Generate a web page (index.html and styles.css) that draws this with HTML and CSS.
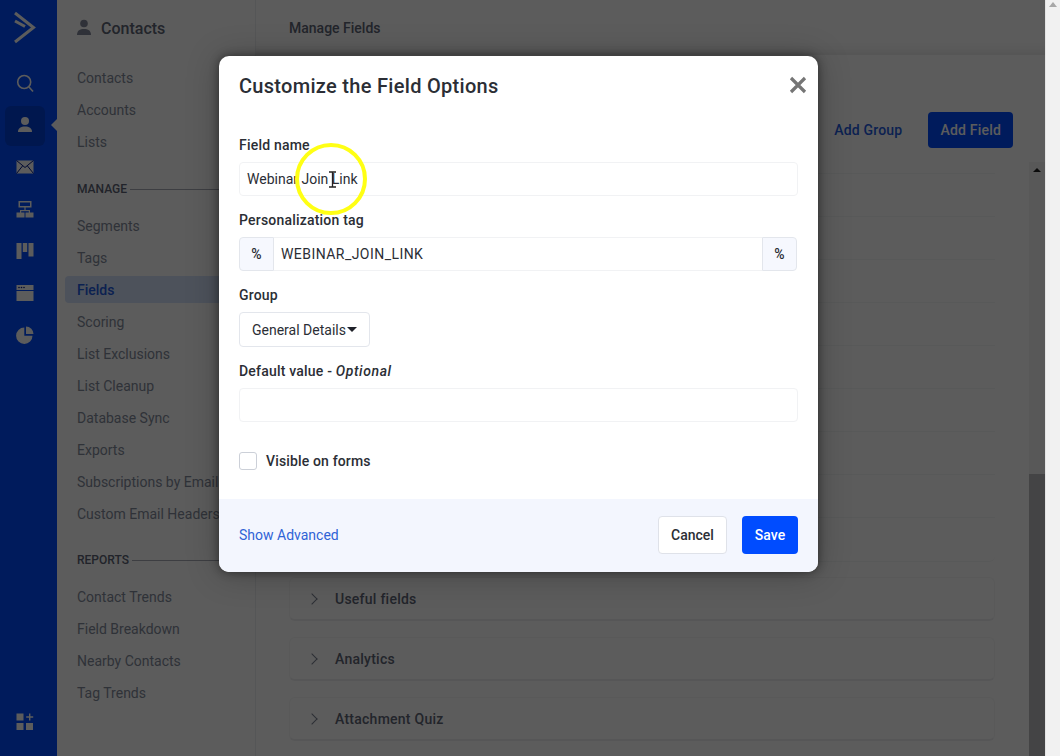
FILE: index.html
```html
<!DOCTYPE html>
<html lang="en">
<head>
  <meta charset="UTF-8">
  <meta name="viewport" content="width=device-width, initial-scale=1.0">
  <title>Manage Fields</title>
  <link rel="stylesheet" href="styles.css">
</head>
<body>

  <div class="page">
    <div class="app">

      <!-- Icon rail -->
      <nav class="rail">
        <div class="rail-logo">
          <svg width="24" height="34" viewBox="0 0 24 34" fill="none" stroke="#fff" stroke-width="3"><path d="M2 2 L20.500 16.500 L2 31"/><path d="M2 10 L12 15.500"/></svg>
        </div>
        <div class="rail-item">
          <svg width="20" height="20" viewBox="0 0 20 20" fill="none" stroke="#fff" stroke-width="1.600"><circle cx="9.200" cy="9" r="6.500"/><path d="M14 14 L18 18.500"/></svg>
        </div>
        <div class="rail-item active">
          <svg width="20" height="20" viewBox="0 0 20 20" fill="#fff"><circle cx="10" cy="6" r="4"/><path d="M3 17 C3 13 6 11.500 10 11.500 C14 11.500 17 13 17 17 Z"/></svg>
        </div>
        <div class="rail-item">
          <svg width="20" height="20" viewBox="0 0 20 20"><rect x="1.500" y="3.500" width="17" height="13" fill="#fff"/><path d="M1.500 3.500 L10 10.500 L18.500 3.500 M1.500 16.500 L7.500 9 M18.500 16.500 L12.500 9" fill="none" stroke="#001a8c" stroke-width="1"/></svg>
        </div>
        <div class="rail-item">
          <svg width="20" height="20" viewBox="0 0 20 20" fill="#fff"><path d="M3.500 2 H16.500 V8.500 H3.500 Z M5 3.500 V7 H15 V3.500 Z"/><rect x="9.400" y="8" width="1.200" height="3.500"/><rect x="5" y="11" width="10" height="1.200"/><rect x="1.500" y="13.500" width="8" height="5"/><rect x="10.500" y="13.500" width="8" height="5"/><rect x="5" y="11" width="1.200" height="3"/><rect x="13.800" y="11" width="1.200" height="3"/></svg>
        </div>
        <div class="rail-item">
          <svg width="20" height="20" viewBox="0 0 20 20" fill="#fff"><rect x="1.500" y="2" width="5" height="16"/><rect x="7.800" y="2" width="4.400" height="9"/><rect x="13.500" y="2" width="5" height="13.500"/></svg>
        </div>
        <div class="rail-item">
          <svg width="20" height="20" viewBox="0 0 20 20" fill="#fff"><path d="M1.500 2 H18.500 V7 H1.500 Z" /><rect x="1.500" y="8" width="17" height="10"/><circle cx="4" cy="4.500" r=".8" fill="#001a8c"/><circle cx="6.500" cy="4.500" r=".8" fill="#001a8c"/><circle cx="9" cy="4.500" r=".8" fill="#001a8c"/></svg>
        </div>
        <div class="rail-item">
          <svg width="20" height="20" viewBox="0 0 20 20" fill="#fff"><path d="M9.300 2.500 V10.700 H17.500 A8.200 8.200 0 1 1 9.300 2.500 Z"/><path d="M11 1.500 A7.500 7.500 0 0 1 18.500 9 H11 Z"/></svg>
        </div>
        <div class="rail-apps">
          <svg width="20" height="20" viewBox="0 0 20 20" fill="#fff"><rect x="1.500" y="1.500" width="7" height="7"/><rect x="1.500" y="11" width="7" height="7"/><rect x="11" y="11" width="7" height="7"/><path d="M14 1.500 H15.400 V4.300 H18.200 V5.700 H15.400 V8.500 H14 V5.700 H11.200 V4.300 H14 Z"/></svg>
        </div>
      </nav>

      <!-- Section navigation -->
      <aside class="subnav">
        <div class="subnav-title">
          <svg width="14" height="18" viewBox="0 0 14 18" fill="#83899b"><circle cx="7" cy="4.500" r="3.800"/><path d="M0 16 C0 11.500 3 10 7 10 C11 10 14 11.500 14 16 Z"/></svg>
          <span>Contacts</span>
        </div>
        <ul class="subnav-list">
          <li>Contacts</li>
          <li>Accounts</li>
          <li>Lists</li>
        </ul>
        <div class="subnav-section">MANAGE</div>
        <ul class="subnav-list">
          <li>Segments</li>
          <li>Tags</li>
          <li class="current">Fields</li>
          <li>Scoring</li>
          <li>List Exclusions</li>
          <li>List Cleanup</li>
          <li>Database Sync</li>
          <li>Exports</li>
          <li>Subscriptions by Email</li>
          <li>Custom Email Headers</li>
        </ul>
        <div class="subnav-section reports">REPORTS</div>
        <ul class="subnav-list">
          <li>Contact Trends</li>
          <li>Field Breakdown</li>
          <li>Nearby Contacts</li>
          <li>Tag Trends</li>
        </ul>
      </aside>

      <!-- Main content behind the dialog -->
      <main class="main">
        <header class="main-header">Manage Fields</header>
        <div class="toolbar">
          <span class="add-group">Add Group</span>
          <span class="add-field">Add Field</span>
        </div>
        <div class="scroller">
          <div class="field-groups">
            <div class="field-table">
              <div class="field-row first"></div>
              <div class="field-row"></div>
              <div class="field-row"></div>
              <div class="field-row"></div>
              <div class="field-row"></div>
              <div class="field-row"></div>
              <div class="field-row"></div>
              <div class="field-row"></div>
              <div class="field-row"></div>
              <div class="field-row"></div>
            </div>
            <div class="accordion"><span class="chevron"></span>Useful fields</div>
            <div class="accordion"><span class="chevron"></span>Analytics</div>
            <div class="accordion"><span class="chevron"></span>Attachment Quiz</div>
          </div>
          <div class="inner-scrollbar">
            <span class="inner-arrow"></span>
            <div class="inner-thumb"></div>
          </div>
        </div>
      </main>
    </div>

    <div class="overlay"></div>

    <!-- Customize dialog -->
    <div class="modal">
      <div class="modal-head">
        <h2>Customize the Field Options</h2>
        <svg class="modal-close" width="18" height="18" viewBox="0 0 18 18" fill="none" stroke="#757575" stroke-width="3.200"><path d="M2 2 L16 16 M16 2 L2 16"/></svg>
      </div>
      <div class="modal-body">
        <div class="field">
          <label>Field name</label>
          <div class="input">Webinar Join Link</div>
        </div>
        <div class="field">
          <label>Personalization tag</label>
          <div class="tag-input">
            <span class="addon left">%</span>
            <div class="tag-value">WEBINAR_JOIN_LINK</div>
            <span class="addon right">%</span>
          </div>
        </div>
        <div class="field">
          <label>Group</label>
          <div class="select">General Details<span class="caret"></span></div>
        </div>
        <div class="field">
          <label>Default value - <em>Optional</em></label>
          <div class="input"></div>
        </div>
        <div class="check-row">
          <span class="checkbox"></span>
          <span>Visible on forms</span>
        </div>
      </div>
      <div class="modal-foot">
        <a class="show-advanced">Show Advanced</a>
        <div class="modal-actions">
          <button class="btn-cancel">Cancel</button>
          <button class="btn-save">Save</button>
        </div>
      </div>
    </div>

    <!-- Recording cursor highlight -->
    <div class="cursor-ring"></div>
    <svg class="cursor-beam" width="11" height="17" viewBox="0 0 11 17" fill="none" stroke="#222" stroke-width="1.300"><path d="M2 1 H9 M5.500 1 V16 M2 16 H9"/></svg>
  </div>

  <div class="page-scrollbar"><span class="page-arrow"></span></div>

</body>
</html>
```

FILE: styles.css
```css
/* General */
body {
  font-family: Roboto, "Liberation Sans", sans-serif;
  margin: 0;
  width: 1060px;
  height: 756px;
  overflow: hidden;
  display: flex;
  background-color: #ffffff;
  color: #1f2129;
}

ul {
  list-style: none;
  margin: 0;
  padding: 0;
}

.page {
  position: relative;
  width: 1045px;
  height: 756px;
  overflow: hidden;
}

.app {
  display: flex;
  height: 100%;
}

/* Icon rail */
.rail {
  width: 57px;
  flex-shrink: 0;
  padding-right: 7px;
  box-sizing: border-box;
  background-color: #004cff;
  display: flex;
  flex-direction: column;
  align-items: center;
}

.rail-logo {
  height: 62px;
  padding-top: 11px;
  box-sizing: border-box;
}

.rail-logo svg {
  display: block;
}

.rail-item {
  width: 40px;
  height: 42px;
  display: flex;
  align-items: center;
  justify-content: center;
}

.rail-item.active {
  position: relative;
  background-color: #0040d8;
  border-radius: 6px;
  height: 40px;
  margin: 2px 0 0;
}

.rail-item.active svg {
  margin-top: -2px;
}

/* notch pointing at the open section */
.rail-item.active::after {
  content: "";
  position: absolute;
  right: -12px;
  top: 13px;
  border: 6px solid transparent;
  border-left: 0;
  border-right-color: #ffffff;
}

.rail-apps {
  margin-top: auto;
  margin-bottom: 24px;
  height: 20px;
}

/* Section navigation */
.subnav {
  width: 199px;
  flex-shrink: 0;
  padding-left: 20px;
  box-sizing: border-box;
  border-right: 1px solid #ecedf0;
  font-size: 14px;
  color: #848b9c;
}

.subnav-title {
  height: 62px;
  padding-top: 18px;
  box-sizing: border-box;
  display: flex;
  align-items: flex-start;
  gap: 10px;
  font-size: 16px;
  font-weight: 500;
  line-height: 21px;
  color: #5f6677;
}

.subnav-title svg {
  margin-top: 1px;
}

.subnav-list li {
  height: 32px;
  line-height: 32px;
  white-space: nowrap;
}

.subnav-list li.current {
  margin: 2px 0 3px -12px;
  padding-left: 12px;
  height: 27px;
  line-height: 29px;
  background-color: #d5e2fb;
  color: #1f5ce0;
  border-radius: 4px;
  font-weight: 500;
}

.subnav-section {
  display: flex;
  align-items: center;
  gap: 3px;
  height: 32px;
  margin: 15px 19px 5px 0;
  font-size: 12px;
  font-weight: 500;
  color: #5c6375;
}

.subnav-section.reports {
  margin-top: 14px;
}

.subnav-section::after {
  content: "";
  flex: 1;
  height: 1px;
  background-color: #a9adb8;
}

/* Main content */
.main {
  flex: 1;
  min-width: 0;
  display: flex;
  flex-direction: column;
}

.main-header {
  height: 55px;
  padding: 18px 0 0 33px;
  box-sizing: border-box;
  font-size: 14px;
  font-weight: 500;
  line-height: 20px;
  color: #5f6677;
  box-shadow: inset 0 -14px 14px -12px rgba(0, 0, 0, 0.12);
}

.toolbar {
  height: 107px;
  padding: 57px 32px 0 0;
  box-sizing: border-box;
  display: flex;
  justify-content: flex-end;
  align-items: flex-start;
  gap: 26px;
  font-size: 14px;
  font-weight: 500;
  letter-spacing: 0.2px;
}

.add-group {
  line-height: 36px;
  color: #1f5ce0;
}

.add-field {
  height: 36px;
  line-height: 36px;
  padding: 0 12px;
  background-color: #004cff;
  color: #ffffff;
  border-radius: 4px;
}

.scroller {
  flex: 1;
  min-height: 0;
  display: flex;
  overflow: hidden;
}

.field-groups {
  flex: 1;
  padding: 0 34px 0 33px;
}

.field-table {
  border-bottom: 1px solid #f4f5f6;
  border-radius: 0 0 6px 6px;
  margin-bottom: 15px;
}

.field-row {
  height: 43px;
  border-bottom: 1px solid #f4f5f6;
  box-sizing: border-box;
}

.field-row.first {
  height: 12px;
}

.field-row:last-child {
  border-bottom: 0;
}

.accordion {
  height: 44px;
  margin-bottom: 16px;
  padding-left: 18px;
  box-sizing: border-box;
  border: 1px solid #f5f6f7;
  border-bottom: 2px solid #eeeff1;
  border-radius: 6px;
  display: flex;
  align-items: center;
  font-size: 14px;
  font-weight: 500;
  letter-spacing: 0.25px;
  color: #5f6677;
}

.chevron {
  width: 7px;
  height: 7px;
  margin-right: 19px;
  border-top: 1.500px solid #7a8090;
  border-right: 1.500px solid #7a8090;
  transform: rotate(45deg);
}

.inner-scrollbar {
  width: 16px;
  flex-shrink: 0;
  background-color: #f4f4f4;
  position: relative;
}

.inner-arrow {
  position: absolute;
  left: 4px;
  top: 6px;
  border: 4px solid transparent;
  border-top: 0;
  border-bottom: 4px solid #202020;
}

.inner-thumb {
  margin-top: 312px;
  height: 300px;
  background-color: #bdbdbe;
}

/* Dim layer */
.overlay {
  position: absolute;
  inset: 0;
  background-color: rgba(0, 0, 0, 0.64);
}

/* Dialog */
.modal {
  position: absolute;
  left: 219px;
  top: 56px;
  width: 599px;
  height: 516px;
  background-color: #ffffff;
  border-radius: 10px;
  box-shadow: 0 0 10px rgba(0, 0, 0, 0.45), 0 2px 32px rgba(0, 0, 0, 0.25);
  display: flex;
  flex-direction: column;
  overflow: hidden;
  color: #2b2e35;
  font-size: 14px;
}

.modal-head {
  height: 79px;
  flex-shrink: 0;
  padding: 18px 11px 0 20px;
  box-sizing: border-box;
  display: flex;
  justify-content: space-between;
  align-items: flex-start;
}

.modal-head h2 {
  margin: 0;
  font-size: 20px;
  font-weight: 500;
  line-height: 24px;
  letter-spacing: 0.3px;
}

.modal-close {
  margin-top: 2px;
}

.modal-body {
  flex: 1;
  padding: 0 20px;
}

.field {
  margin-bottom: 14px;
}

.field label {
  display: block;
  height: 20px;
  margin-bottom: 7px;
  line-height: 20px;
  font-weight: 500;
  letter-spacing: 0.2px;
}

.field em {
  font-style: italic;
  letter-spacing: 0.6px;
}

.input {
  height: 34px;
  line-height: 33px;
  padding-left: 7px;
  box-sizing: border-box;
  border: 1px solid #f1f2f4;
  border-radius: 4px;
}

.tag-input {
  display: flex;
  height: 34px;
  width: 558px;
  line-height: 33px;
}

.tag-value {
  flex: 1;
  padding-left: 7px;
  letter-spacing: 0.45px;
  border-top: 1px solid #f1f2f4;
  border-bottom: 1px solid #f1f2f4;
}

.addon {
  width: 35px;
  box-sizing: border-box;
  text-align: center;
  font-weight: 500;
  background-color: #f6f8fe;
  border: 1px solid #e3e6ec;
}

.addon.left {
  border-radius: 4px 0 0 4px;
}

.addon.right {
  border-radius: 0 4px 4px 0;
}

.select {
  display: inline-flex;
  align-items: center;
  height: 35px;
  width: 131px;
  padding-left: 12px;
  box-sizing: border-box;
  border: 1px solid #e3e6ec;
  border-radius: 4px;
  white-space: nowrap;
}

.caret {
  margin-left: 1px;
  border: 5px solid transparent;
  border-bottom: 0;
  border-top: 5px solid #1f2129;
}

.check-row {
  display: flex;
  align-items: center;
  gap: 9px;
  margin-top: 30px;
  font-weight: 500;
  letter-spacing: 0.15px;
}

.checkbox {
  width: 18px;
  height: 18px;
  box-sizing: border-box;
  border: 1px solid #ccd0d8;
  border-radius: 3px;
}

.modal-foot {
  height: 73px;
  flex-shrink: 0;
  padding: 0 20px 2px;
  box-sizing: border-box;
  background-color: #f3f6fe;
  display: flex;
  justify-content: space-between;
  align-items: center;
}

.show-advanced {
  color: #2f63d6;
}

.modal-actions {
  display: flex;
  gap: 15px;
}

.modal-actions button {
  height: 38px;
  padding: 0;
  font-family: inherit;
  font-size: 14px;
  font-weight: 500;
  border-radius: 4px;
}

.btn-cancel {
  width: 69px;
  background-color: #ffffff;
  border: 1px solid #dfe2e9;
  color: #2b2e35;
}

.btn-save {
  width: 56px;
  background-color: #004cff;
  border: 0;
  color: #ffffff;
}

/* Recording cursor */
.cursor-ring {
  position: absolute;
  left: 295px;
  top: 143px;
  width: 72px;
  height: 72px;
  box-sizing: border-box;
  border: 4px solid #ffff14;
  border-radius: 50%;
}

.cursor-beam {
  position: absolute;
  left: 327px;
  top: 171px;
}

/* Browser scrollbar */
.page-scrollbar {
  width: 15px;
  height: 756px;
  box-sizing: border-box;
  background-color: #f1f1f1;
  border-left: 1px solid #e4e4e4;
  position: relative;
}

.page-arrow {
  position: absolute;
  left: 3px;
  top: 2px;
  border: 4px solid transparent;
  border-top: 0;
  border-bottom: 5px solid #a8a8a8;
}
```
